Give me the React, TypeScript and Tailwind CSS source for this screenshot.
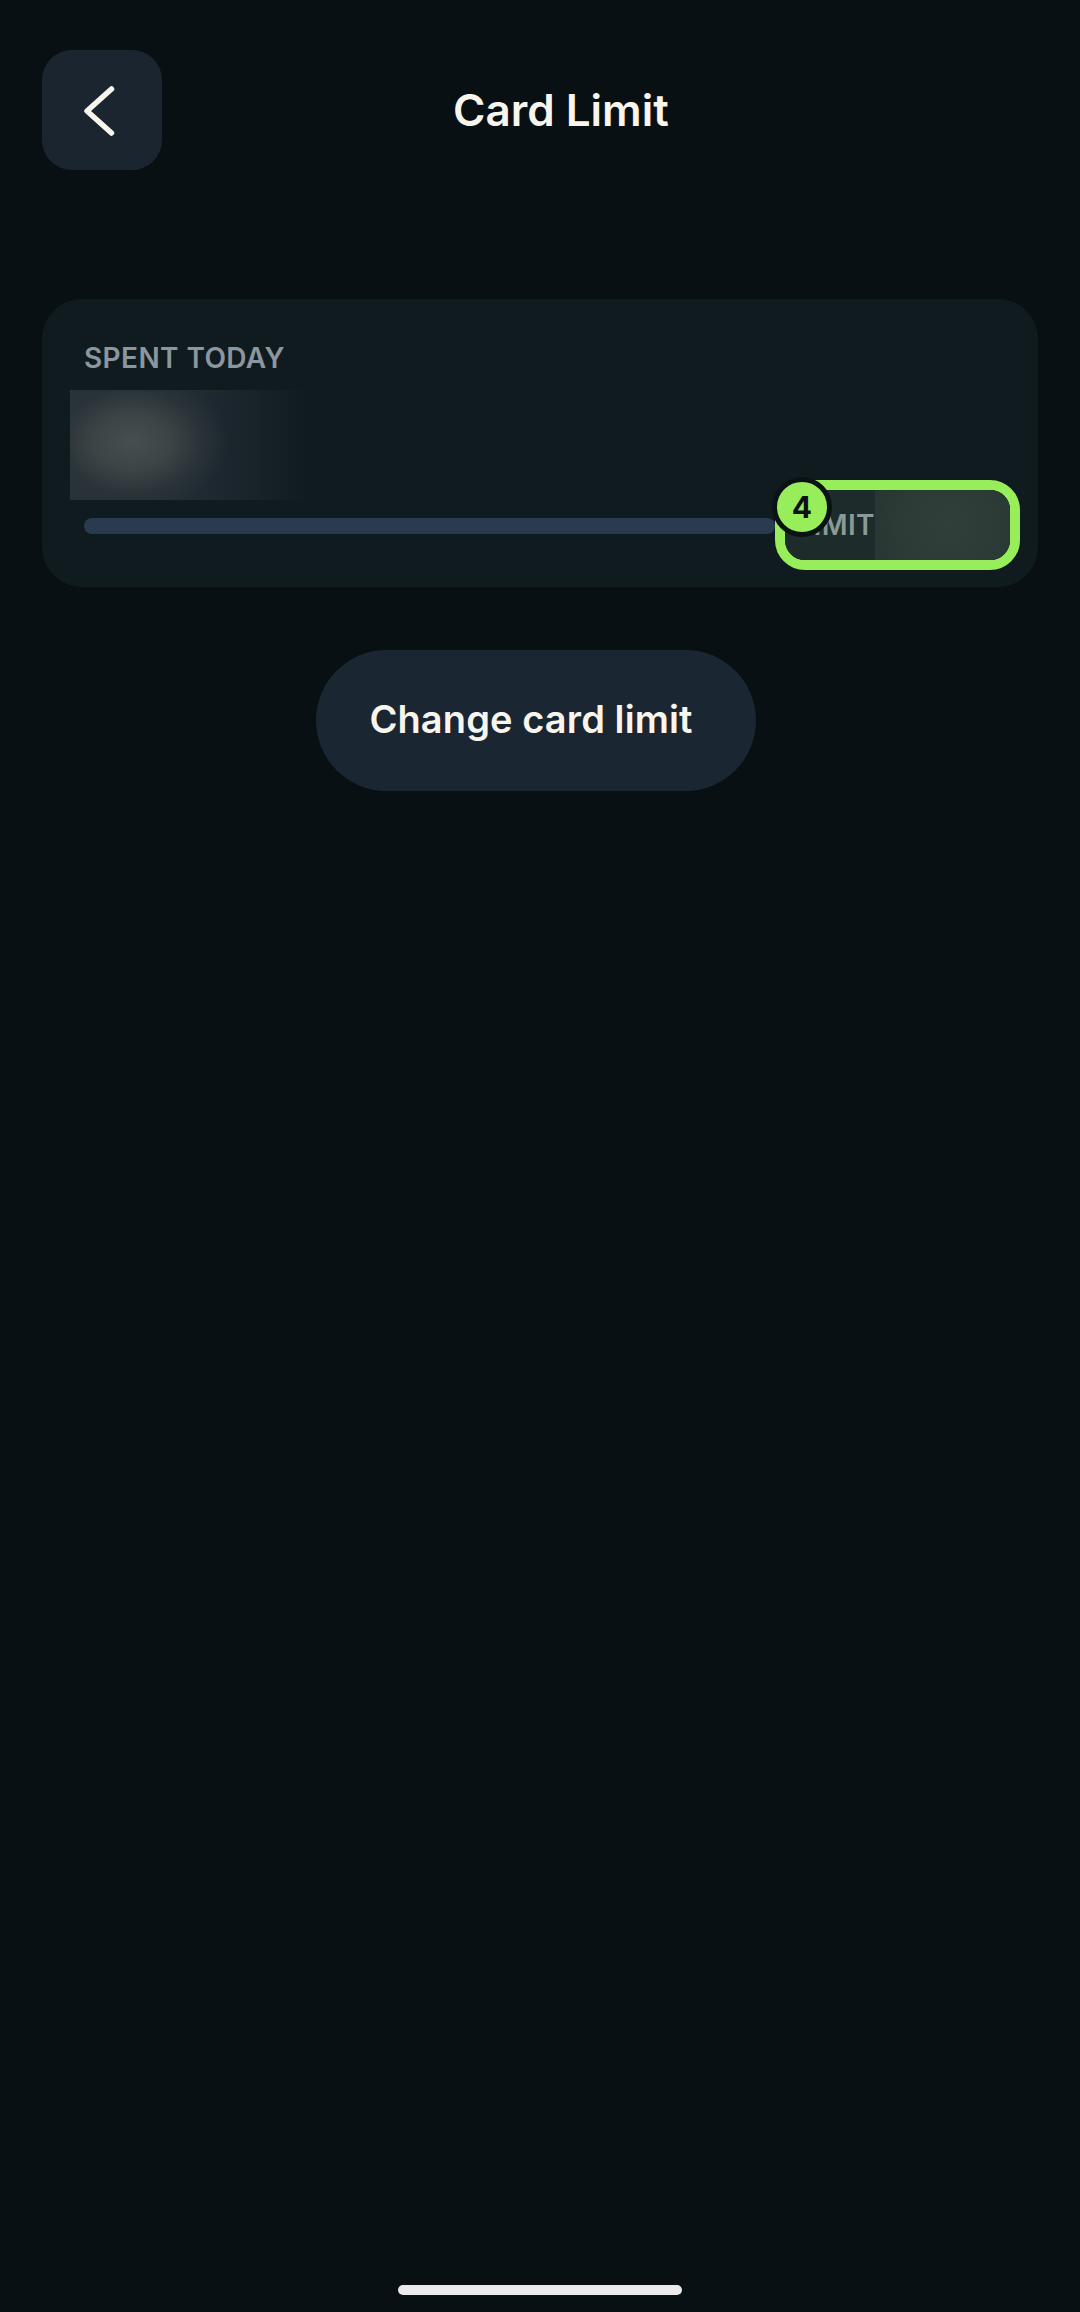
import React from 'react';

const fontStack = "font-['Inter','Liberation_Sans',sans-serif]";

function BackButton() {
  return (
    <button className="flex h-[120px] w-[120px] shrink-0 items-center justify-center rounded-[30px] bg-[#1a2530]">
      <svg width="120" height="120" viewBox="0 0 120 120" fill="none">
        <path
          d="M69.5 39 L45 61 L69.5 83"
          stroke="#f8f5ec"
          strokeWidth="5.5"
          strokeLinecap="round"
          strokeLinejoin="round"
        />
      </svg>
    </button>
  );
}

function LimitBox() {
  return (
    <div className="relative h-[90px] w-[245px] shrink-0 rounded-[30px] border-[10px] border-[#98ee5a]">
      <div className="flex h-full w-full overflow-hidden rounded-[20px] bg-[#1d2c2a]">
        <div className="flex w-[90px] shrink-0 items-center justify-end">
          <span className="mt-[-1px] text-[28px] leading-none font-semibold tracking-[0.4px] text-[#8a9a98]">
            LIMIT
          </span>
        </div>
        <div className="flex-1 bg-[radial-gradient(circle_at_55%_50%,#303f39_0%,#2c3b36_60%,#273632_100%)]" />
      </div>
      {/* step marker */}
      <div className="absolute top-[-13px] left-[-13px] flex h-[60px] w-[60px] items-center justify-center rounded-full border-[5px] border-[#0a1215] bg-[#98ee5a] text-[30px] font-bold text-[#0a1215]">
        4
      </div>
    </div>
  );
}

function App() {
  return (
    <div className={`flex min-h-[2312px] flex-col bg-[#081014] ${fontStack}`}>
      {/* Header */}
      <div className="flex items-center pt-[50px] pl-[42px]">
        <BackButton />
        <h1 className="ml-[291px] text-[44px] leading-none font-semibold text-[#f8f5ec]">Card Limit</h1>
      </div>

      {/* Spend card */}
      <section className="mx-[42px] mt-[129px] h-[288px] rounded-[40px] bg-[#101b20] pt-[45px] pr-[18px] pl-[42px]">
        <p className="text-[28px] leading-[28px] font-semibold tracking-[0.4px] text-[#8b969e]">SPENT TODAY</p>
        <div className="mt-[18px] ml-[-14px] h-[110px] w-[240px] bg-[radial-gradient(ellipse_95px_70px_at_62px_52px,#474e4f_0%,#3c4446_40%,rgba(42,51,56,0.8)_75%,rgba(16,27,32,0)_100%),linear-gradient(90deg,#29323a_0%,#222d35_45%,#1a252c_70%,#101b20_100%)]" />
        <div className="mt-[-20px] flex items-center">
          <div className="mt-[2px] h-4 flex-1 rounded-l-lg rounded-r-lg bg-[#2a3b4f]" />
          <LimitBox />
        </div>
      </section>

      {/* Action */}
      <button className="mt-[63px] ml-[316px] h-[141px] w-[440px] rounded-full bg-[#1a2632] pr-[10px] pb-[3px] text-[38px] font-semibold tracking-[0.1px] text-[#f8f5ec]">
        Change card limit
      </button>

      {/* Home indicator */}
      <div className="mt-auto mb-[17px] ml-[398px] h-[10px] w-[284px] rounded-full bg-[#eaeaea]" />
    </div>
  );
}

export default App;
